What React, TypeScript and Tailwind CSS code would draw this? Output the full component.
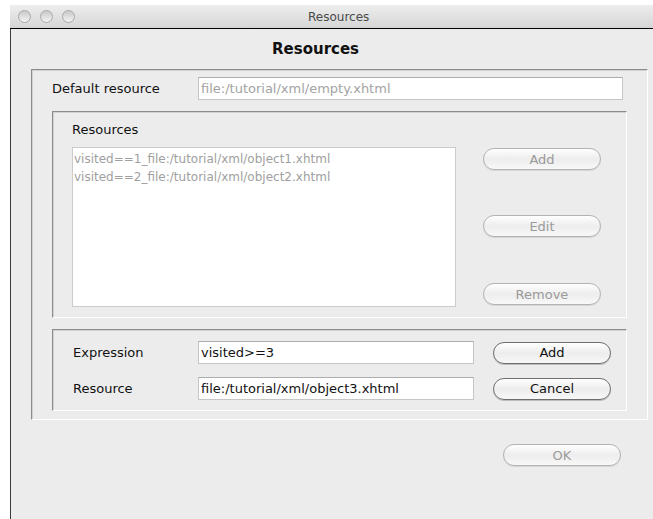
import React from "react";

const font = { fontFamily: '"DejaVu Sans", "Liberation Sans", sans-serif' };

function AquaButton({ label, enabled = false, className = "" }: { label: string; enabled?: boolean; className?: string }) {
  return (
    <div
      className={
        "w-[118px] h-[22px] rounded-full border flex items-center justify-center text-[13px] leading-none bg-gradient-to-b from-white via-[#ededed] to-[#f8f8f8] " +
        (enabled
          ? "border-[#6e6e6e] text-[#111] shadow-[0_1px_0_#bdbdbd]"
          : "border-[#b3b3b3] text-[#9a9a9a] shadow-[0_1px_0_#d6d6d6]") +
        " " +
        className
      }
    >
      {label}
    </div>
  );
}

function Field({ value, muted = false, className = "" }: { value: string; muted?: boolean; className?: string }) {
  return (
    <div
      className={
        "h-[23px] bg-white border border-[#c6c6c6] border-t-[#adadad] flex items-center pl-[2px] text-[13px] whitespace-nowrap overflow-hidden " +
        (muted ? "text-[#a3a3a3] " : "text-[#111] ") +
        className
      }
    >
      {value}
    </div>
  );
}

const etched =
  "border border-t-[#8c8c8c] border-l-[#8c8c8c] border-b-white border-r-white shadow-[inset_1px_1px_0_#d0d0d0]";

export default function App() {
  return (
    <div className="w-[653px] h-[519px] bg-white pt-[5px] pl-[10px] flex flex-col overflow-hidden" style={font}>
      {/* title bar */}
      <div className="h-[24px] shrink-0 border-b border-black bg-gradient-to-b from-[#eeeeee] to-[#d5d5d5] flex items-center relative">
        <div className="flex items-center gap-[9px] pl-[8px]">
          {[0, 1, 2].map((i) => (
            <div
              key={i}
              className="w-[13px] h-[13px] rounded-full border border-[#a9a9a9] bg-gradient-to-b from-[#c9c9c9] to-[#f4f4f4]"
            />
          ))}
        </div>
        <div className="absolute left-[298px] top-[3px] text-[12px] text-[#4a4a4a]">Resources</div>
      </div>

      {/* window body */}
      <div className="flex-1 bg-[#ececec] border-l border-[#3c3c3c] flex flex-col">
        <div className="h-[40px] flex items-center pl-[261px] text-[15px] font-bold text-[#111]">Resources</div>

        <div className={"ml-[20px] w-[617px] h-[351px] flex flex-col " + etched}>
          <div className="mt-[7px] flex items-center">
            <div className="w-[166px] pl-[20px] text-[13px] text-[#111]">Default resource</div>
            <Field value="file:/tutorial/xml/empty.xhtml" muted className="w-[425px]" />
          </div>

          <div className={"mt-[11px] ml-[20px] w-[575px] h-[207px] flex flex-col " + etched}>
            <div className="pt-[10px] pl-[19px] text-[13px] leading-[16px] text-[#111]">Resources</div>
            <div className="mt-[9px] ml-[19px] flex items-start">
              <div className="w-[384px] h-[160px] bg-white border border-[#cbcbcb] pt-[2px] pl-[1px] text-[12px] leading-[18px] text-[#a0a0a0] whitespace-nowrap">
                <div>visited==1_file:/tutorial/xml/object1.xhtml</div>
                <div>visited==2_file:/tutorial/xml/object2.xhtml</div>
              </div>
              <div className="ml-[27px] pt-[1px] flex flex-col">
                <AquaButton label="Add" />
                <AquaButton label="Edit" className="mt-[45px]" />
                <AquaButton label="Remove" className="mt-[46px]" />
              </div>
            </div>
          </div>

          <div className={"mt-[11px] ml-[20px] w-[575px] h-[82px] flex flex-col " + etched}>
            <div className="mt-[11px] flex items-center">
              <div className="w-[145px] pl-[20px] text-[13px] text-[#111]">Expression</div>
              <Field value="visited>=3" className="w-[276px]" />
              <AquaButton label="Add" enabled className="ml-[19px]" />
            </div>
            <div className="mt-[13px] flex items-center">
              <div className="w-[145px] pl-[20px] text-[13px] text-[#111]">Resource</div>
              <Field value="file:/tutorial/xml/object3.xhtml" className="w-[276px]" />
              <AquaButton label="Cancel" enabled className="ml-[19px]" />
            </div>
          </div>
        </div>

        <div className="mt-[24px] ml-[492px]">
          <AquaButton label="OK" />
        </div>
      </div>
    </div>
  );
}
